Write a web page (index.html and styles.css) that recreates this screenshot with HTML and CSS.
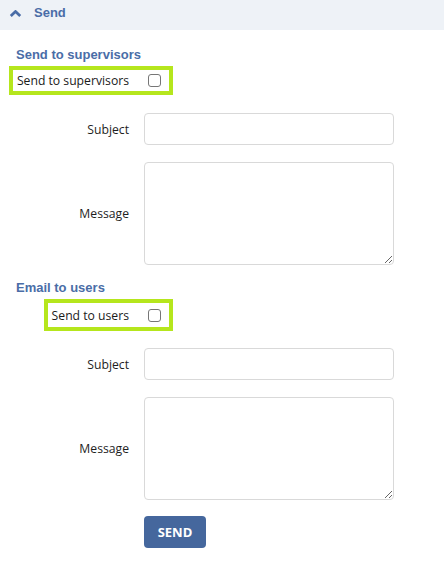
FILE: index.html
```html
<!DOCTYPE html>
<html>
<head>
<meta charset="utf-8">
<link rel="stylesheet" href="styles.css">
</head>
<body>
<div class="panel-header">
  <svg class="chevron" width="13" height="8" viewBox="0 0 13 8"><path d="M1.8 5.9 L6.5 1.5 L11.2 5.9" fill="none" stroke="#4a6da7" stroke-width="2.8" stroke-linecap="butt" stroke-linejoin="miter"/></svg>
  <span class="panel-title">Send</span>
</div>
<div class="panel-body">
  <div class="section">
    <h3 class="section-title">Send to supervisors</h3>
    <div class="check-wrap">
      <label class="check-box"><span class="check-text">Send to supervisors</span><input type="checkbox" class="check"></label>
    </div>
    <div class="form-row first-row">
      <label class="field-label">Subject</label>
      <input type="text" class="text-input">
    </div>
    <div class="form-row">
      <label class="field-label">Message</label>
      <textarea class="text-area"></textarea>
    </div>
  </div>
  <div class="section">
    <h3 class="section-title">Email to users</h3>
    <div class="check-wrap">
      <label class="check-box check-box-tall"><span class="check-text">Send to users</span><input type="checkbox" class="check"></label>
    </div>
    <div class="form-row">
      <label class="field-label">Subject</label>
      <input type="text" class="text-input">
    </div>
    <div class="form-row">
      <label class="field-label">Message</label>
      <textarea class="text-area"></textarea>
    </div>
    <div class="form-row button-row">
      <span></span>
      <div><button class="send-btn">SEND</button></div>
    </div>
  </div>
</div>
</body>
</html>
```
FILE: styles.css
```css
html, body {
  margin: 0;
  padding: 0;
  background: #ffffff;
}
body {
  font-family: "Open Sans", "Noto Sans", sans-serif;
  font-size: 12.2px;
  color: #1e1e1e;
}
.panel-header {
  box-sizing: border-box;
  height: 30px;
  background: #eef2f7;
  display: flex;
  align-items: flex-start;
  padding: 5px 0 0 9px;
  gap: 12px;
}
.chevron {
  display: block;
  margin-top: 4.5px;
}
.panel-title {
  font-family: "Liberation Sans", Arial, sans-serif;
  font-weight: bold;
  font-size: 13px;
  line-height: 15px;
  color: #4a6da7;
}
.panel-body {
  padding-top: 17px;
}
.section-title {
  margin: 0 0 4px 16px;
  font-family: "Liberation Sans", Arial, sans-serif;
  font-weight: bold;
  font-size: 13px;
  line-height: 15px;
  color: #4a6da7;
}
.check-wrap {
  width: 173px;
  display: flex;
  justify-content: flex-end;
}
.check-box {
  display: inline-flex;
  align-items: center;
  border: 4px solid #b5e61d;
  padding: 0 8px 0 4px;
  height: 21px;
  line-height: 21px;
}
.check-box-tall {
  height: 24px;
}
.check-text {
  margin-right: 19px;
  white-space: nowrap;
  color: #1a1a1a;
}
.check {
  appearance: none;
  -webkit-appearance: none;
  margin: 0;
  width: 13px;
  height: 13px;
  border: 1px solid #767676;
  border-radius: 3px;
  background: #fff;
  box-sizing: border-box;
}
.form-row {
  display: grid;
  grid-template-columns: 129px 250px;
  column-gap: 15px;
  align-items: center;
  margin-top: 17px;
}
.first-row {
  margin-top: 18px;
}
.button-row {
  margin-top: 16px;
}
.field-label {
  text-align: right;
}
.text-input {
  box-sizing: border-box;
  width: 250px;
  height: 32px;
  border: 1px solid #d9d9d9;
  border-radius: 4px;
  margin: 0;
  font: inherit;
}
.text-area {
  box-sizing: border-box;
  width: 250px;
  height: 103px;
  border: 1px solid #d9d9d9;
  border-radius: 4px;
  margin: 0;
  font: inherit;
  display: block;
}
.section + .section {
  margin-top: 15px;
}
.send-btn {
  display: block;
  width: 62px;
  height: 32px;
  background: #45679d;
  color: #fff;
  border: none;
  border-radius: 4px;
  font-family: "Open Sans", sans-serif;
  font-weight: bold;
  font-size: 13px;
  padding: 0;
}
```
